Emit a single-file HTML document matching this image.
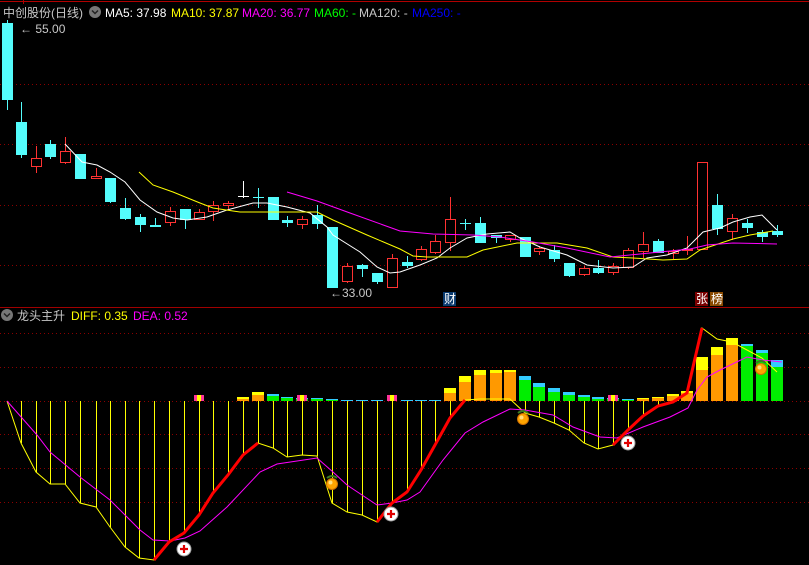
<!DOCTYPE html>
<html><head><meta charset="utf-8"><style>
html,body{margin:0;padding:0;background:#000;width:809px;height:565px;overflow:hidden}
svg{display:block}
text{font-family:"Liberation Sans","Noto Sans CJK SC",sans-serif;font-size:12px}
</style></head><body>
<svg id="s" width="809" height="565" xmlns="http://www.w3.org/2000/svg">
<rect width="809" height="565" fill="#000"/>
<line x1="0" y1="1.5" x2="809" y2="1.5" stroke="#b00000"/>
<line x1="23.5" y1="0" x2="23.5" y2="4" stroke="#b00000"/>
<line x1="0" y1="307.5" x2="809" y2="307.5" stroke="#a00000"/>
<g stroke="#8b0000" stroke-dasharray="1,3">
<line x1="0" y1="84.5" x2="809" y2="84.5"/>
<line x1="0" y1="144.5" x2="809" y2="144.5"/>
<line x1="0" y1="205.5" x2="809" y2="205.5"/>
<line x1="0" y1="265.5" x2="809" y2="265.5"/>
<line x1="0" y1="333.5" x2="809" y2="333.5"/>
<line x1="0" y1="367.5" x2="809" y2="367.5"/>
<line x1="0" y1="401.5" x2="809" y2="401.5"/>
<line x1="0" y1="434.5" x2="809" y2="434.5"/>
<line x1="0" y1="468.5" x2="809" y2="468.5"/>
<line x1="0" y1="502.5" x2="809" y2="502.5"/>
</g>
<g id="top"></g>
<g id="bot"></g>
<text x="3" y="17" fill="#c8c8c8" font-size="13">中创股份(日线)</text>
<circle cx="95" cy="12" r="6" fill="#777"/><path d="M92 10.5 L95 13.5 L98 10.5" stroke="#222" stroke-width="1.5" fill="none"/>
<text x="105" y="17" fill="#fff">MA5: 37.98</text>
<text x="171" y="17" fill="#ff0">MA10: 37.87</text>
<text x="242" y="17" fill="#f0f">MA20: 36.77</text>
<text x="314" y="17" fill="#0f0">MA60: -</text>
<text x="359" y="17" fill="#c8c8c8">MA120: -</text>
<text x="412" y="17" fill="#00f">MA250: -</text>
<text x="20" y="33" fill="#c8c8c8">← 55.00</text>
<text x="330" y="297" fill="#c8c8c8">←33.00</text>
<rect x="443" y="292" width="13" height="14" fill="#0a3a6e"/><text x="444" y="303" fill="#fff">财</text>
<rect x="695" y="292" width="13" height="14" fill="#7a0000"/><text x="696" y="303" fill="#fff">张</text>
<rect x="710" y="292" width="13" height="14" fill="#8a4a00"/><text x="711" y="303" fill="#fff">榜</text>
<circle cx="7" cy="315" r="6" fill="#777"/><path d="M4 313.5 L7 316.5 L10 313.5" stroke="#222" stroke-width="1.5" fill="none"/>
<text x="17" y="320" fill="#c8c8c8" font-size="13">龙头主升</text>
<text x="71" y="320" fill="#ff0">DIFF: 0.35</text>
<text x="133" y="320" fill="#f0f">DEA: 0.52</text>
</svg>
<script>
var NS="http://www.w3.org/2000/svg";
function el(p,t,a){var e=document.createElementNS(NS,t);for(var k in a)e.setAttribute(k,a[k]);p.appendChild(e);return e;}
var T=document.getElementById("top"),B=document.getElementById("bot");
var C=[[7,'c',23,100,20,110],[21,'c',122,155,102,158],[36,'r',158,167,146,173],[50,'c',144,157,140,159],[65,'r',151,163,137,164],[80,'c',154,179,154,179],[96,'r',176,179,168,179],[110,'c',178,202,178,203],[125,'c',208,219,198,220],[140,'c',217,225,214,232],[155,'c',225,227,218,227],[170,'r',211,223,207,226],[185,'c',209,220,209,229],[199,'r',212,220,209,220],[213,'r',205,212,201,221],[228,'r',203,206,201,210],[243,'w',196,196,181,198],[258,'x',197,197,188,208],[273,'c',197,220,197,220],[287,'c',220,223,216,227],[302,'r',219,225,216,229],[317,'c',215,224,205,229],[332,'c',227,288,227,288],[347,'r',266,282,263,283],[362,'c',265,269,264,277],[377,'c',273,282,273,284],[392,'r',258,288,254,288],[407,'c',262,266,256,268],[421,'r',249,260,246,261],[435,'r',241,253,235,254],[450,'r',219,243,197,251],[465,'x',223,223,219,230],[480,'c',223,243,217,243],[496,'c',235,238,235,243],[510,'r',235,240,235,242],[525,'c',237,257,237,257],[539,'r',248,252,246,255],[554,'c',250,259,245,262],[569,'c',263,276,263,277],[584,'r',268,275,266,276],[598,'c',268,273,260,274],[613,'r',266,273,263,275],[628,'r',250,268,248,269],[643,'r',244,252,232,258],[658,'c',241,253,239,253],[673,'r',251,254,249,259],[687,'r',249,251,236,255],[702,'r',162,250,162,250],[717,'c',205,229,194,235],[732,'r',218,232,214,240],[747,'c',223,228,219,233],[762,'c',232,237,230,242],[777,'c',231,235,225,237]];
C.forEach(function(c){var x=c[0],t=c[1];
 if(t=='w'||t=='x'){var col=t=='w'?'#fff':'#54fcfc';el(T,'line',{x1:x+.5,y1:c[4],x2:x+.5,y2:c[5],stroke:col});el(T,'line',{x1:x-5,y1:c[2]+.5,x2:x+6,y2:c[2]+.5,stroke:col});return;}
 if(t=='c'){el(T,'line',{x1:x+.5,y1:c[4],x2:x+.5,y2:c[5],stroke:'#54fcfc'});el(T,'rect',{x:x-5,y:c[2],width:11,height:Math.max(1,c[3]-c[2]),fill:'#54fcfc'});}
 else{el(T,'line',{x1:x+.5,y1:c[4],x2:x+.5,y2:c[2],stroke:'#ff3232'});el(T,'line',{x1:x+.5,y1:c[3],x2:x+.5,y2:c[5],stroke:'#ff3232'});el(T,'rect',{x:x-4.5,y:c[2]+.5,width:10,height:Math.max(1,c[3]-c[2]-1),fill:'#000',stroke:'#ff3232'});}
});
function pl(p,pts,col,w){el(p,'polyline',{points:pts.map(function(q){return q.join(',')}).join(' '),fill:'none',stroke:col,'stroke-width':w||1});}
pl(T,[[65,144],[82,162],[97,165],[110,172],[125,182],[140,200],[157,212],[173,218],[187,220],[207,217],[227,210],[253,203],[267,203],[287,207],[310,213],[327,227],[333,235],[360,252],[377,267],[390,273],[400,272],[420,265],[437,258],[450,248],[467,238],[487,234],[510,232],[520,238],[540,247],[567,255],[587,265],[613,268],[633,267],[647,258],[667,255],[687,248],[703,232],[720,228],[733,222],[750,217],[762,215],[777,230]],'#fff');
pl(T,[[139,172],[153,185],[173,192],[200,203],[213,208],[233,211],[240,212],[317,212],[333,220],[367,235],[400,249],[413,256],[427,257],[467,257],[483,250],[517,243],[557,243],[587,248],[613,257],[633,258],[663,260],[687,259],[700,250],[733,239],[750,235],[773,231]],'#ff0');
pl(T,[[287,192],[317,201],[350,213],[400,231],[433,234],[473,235],[500,237],[533,242],[567,248],[610,257],[650,253],[690,249],[707,245],[733,243],[777,244]],'#f0f');
var DX=[7,21,36,50,65,80,96,110,125,139,154,169,184,199,213,228,243,258,273,287,302,317,332,347,362,377,392,407,421,435,450,465,480,496,510,525,539,554,569,584,598,613,628,643,658,673,687,702,717,732,747,762,777];
var DY=[401,443,472,484,484,503,507,527,547,558,560,542,533,515,493,475,455,443,448,457,455,456,503,512,515,522,503,492,470,445,418,400,399,399,399,413,417,423,430,443,449,445,430,416,406,402,393,328,339,342,350,358,372];
var H=[[243,'y',397,399],[258,'y',392,395],[273,'c',394,396],[287,'c',397,398],[302,'c',398,399],[317,'c',398,399],[332,'c',399,400],[347,'c',400,401],[362,'c',400,401],[377,'c',400,401],[407,'c',400,401],[421,'c',400,401],[435,'c',400,401],[450,'y',388,393],[465,'y',376,382],[480,'y',370,375],[496,'y',370,373],[510,'y',370,372],[525,'c',376,380],[539,'c',383,387],[554,'c',388,392],[569,'c',392,395],[584,'c',395,397],[598,'c',397,399],[613,'c',398,399],[628,'c',399,400],[643,'y',398,399],[658,'y',397,398],[673,'y',394,396],[687,'y',391,393],[702,'y',357,370],[717,'y',347,355],[732,'y',338,345],[747,'c',344,346],[762,'c',350,353],[777,'c',360,367]];
H.forEach(function(h){var x=h[0]-6;el(B,'rect',{x:x,y:h[3],width:12,height:401-h[3],fill:h[1]=='y'?'#ff9900':'#00ee00'});el(B,'rect',{x:x,y:h[2],width:12,height:h[3]-h[2],fill:h[1]=='y'?'#ffff00':'#33ccff'});});
[199,302,392,613].forEach(function(x){el(B,'rect',{x:x-5,y:395,width:10,height:6,fill:'#ff3399'});el(B,'rect',{x:x-2,y:395,width:4,height:6,fill:'#ffff00'});});
for(var i=0;i<DX.length;i++){if(DY[i]>402)el(B,'line',{x1:DX[i]+.5,y1:401,x2:DX[i]+.5,y2:DY[i],stroke:'#ff0'});}
pl(B,DX.map(function(x,i){return[x,DY[i]]}),'#ff0');
pl(B,[[7,401],[37,435],[50,452],[80,477],[110,500],[140,530],[153,540],[170,541],[185,538],[200,531],[227,507],[260,472],[277,464],[317,458],[333,472],[347,485],[377,505],[392,503],[407,500],[420,492],[443,460],[465,433],[483,422],[510,409],[525,410],[553,415],[573,427],[600,437],[617,438],[643,427],[670,417],[688,408],[697,390],[707,377],[720,370],[747,357],[763,360],[782,362]],'#f0f');
function seg(a,b){var p=[];for(var i=a;i<=b;i++)p.push([DX[i],DY[i]]);pl(B,p,'#ff0000',3);}
seg(10,17);seg(25,31);seg(41,47);
[[184,549],[391,514],[628,443]].forEach(function(c){el(B,'circle',{cx:c[0],cy:c[1],r:7,fill:'#fff',stroke:'#999'});el(B,'path',{d:'M'+(c[0]-4)+' '+c[1]+'h8M'+c[0]+' '+(c[1]-4)+'v8',stroke:'#e00000','stroke-width':2.2});});
[[332,484],[523,419],[761,369]].forEach(function(c){el(B,'path',{d:'M'+(c[0]-5)+' '+(c[1]-6)+'q5 -4 10 0',stroke:'#3a7a20','stroke-width':2,fill:'none'});el(B,'circle',{cx:c[0],cy:c[1],r:5.5,fill:'#ffa500',stroke:'#d07000'});el(B,'circle',{cx:c[0]-1.5,cy:c[1]-1.5,r:2,fill:'#ffe080'});});
</script>
</body></html>
